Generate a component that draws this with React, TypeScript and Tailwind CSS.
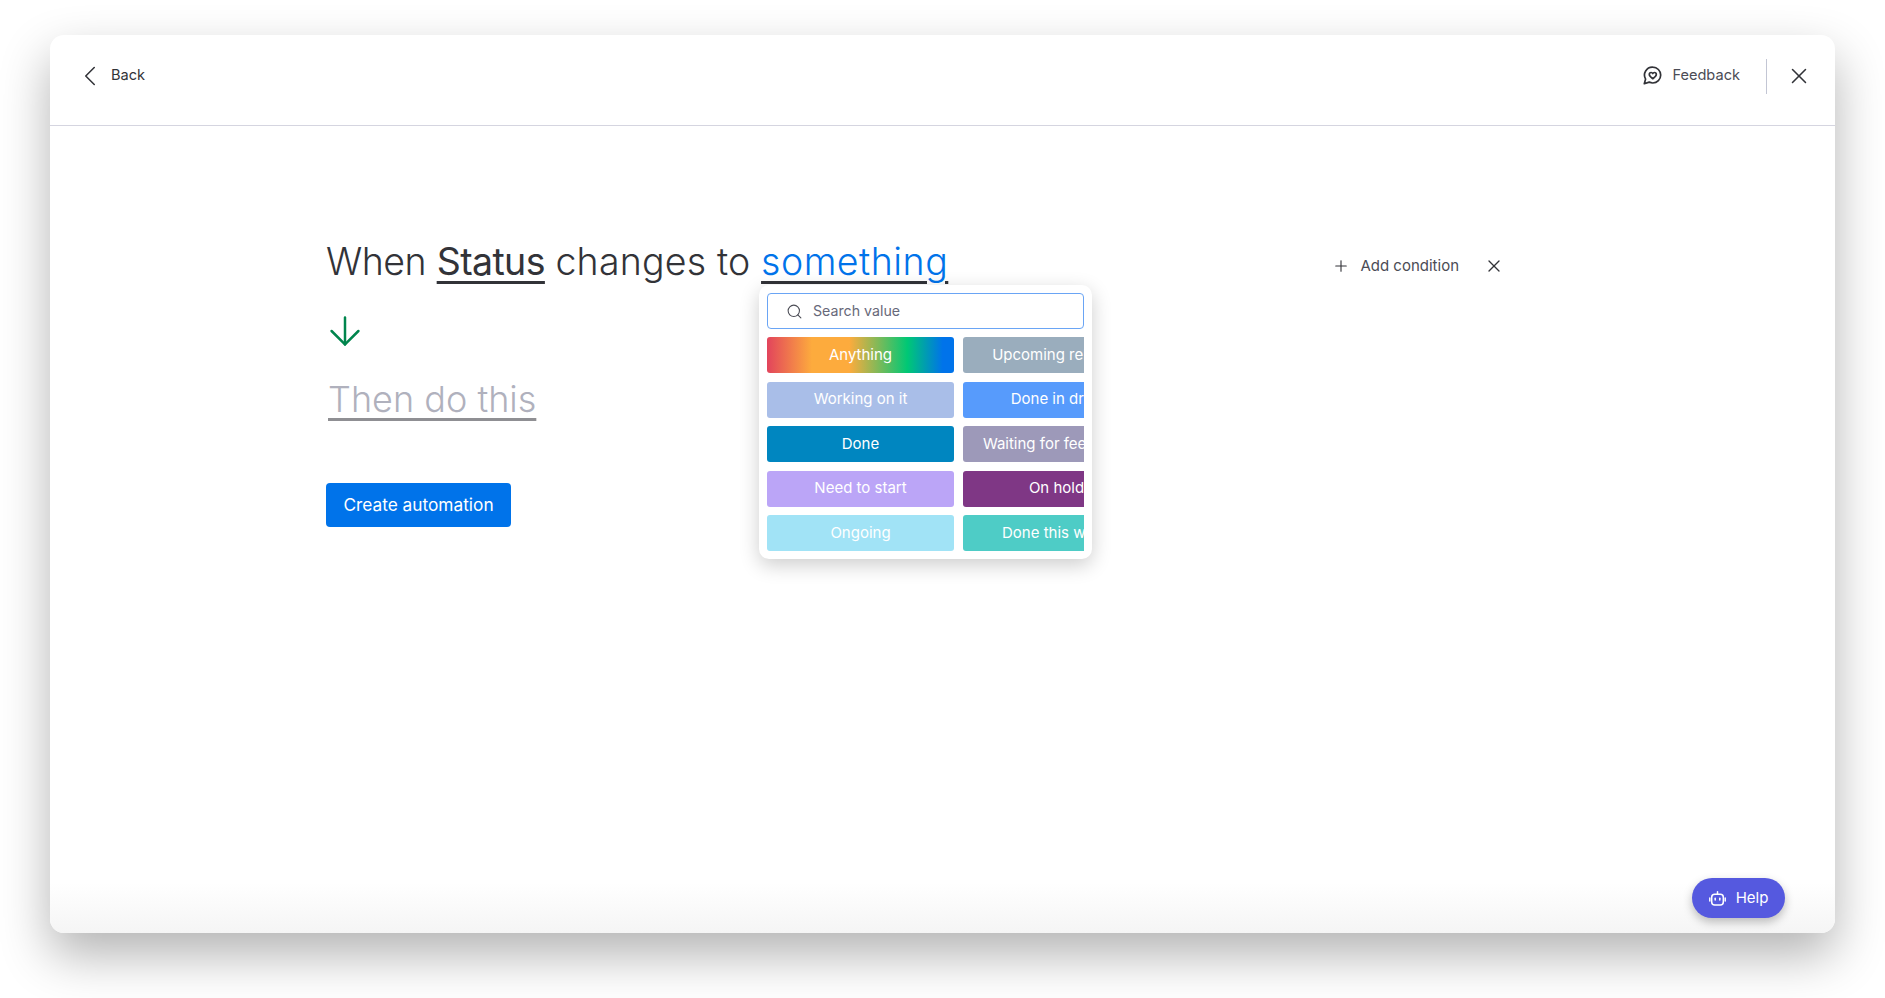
import { ChevronLeft, X, Plus, Search, ArrowDown } from 'lucide-react';

const STATUS_ROWS = [
  [
    { label: 'Anything', color: 'bg-[linear-gradient(90deg,#e2445c_0%,#fdab3d_24%,#fdab3d_44%,#00c875_75%,#0073ea_94%)]' },
    { label: 'Upcoming release', color: 'bg-[#9aadbd]' },
  ],
  [
    { label: 'Working on it', color: 'bg-[#a9bee8]' },
    { label: 'Done in draft', color: 'bg-[#579bfc]' },
  ],
  [
    { label: 'Done', color: 'bg-[#0086c0]' },
    { label: 'Waiting for feedback', color: 'bg-[#9d99b9]' },
  ],
  [
    { label: 'Need to start', color: 'bg-[#bba5f7]' },
    { label: 'On hold', color: 'bg-[#7f3785]' },
  ],
  [
    { label: 'Ongoing', color: 'bg-[#a1e3f6]' },
    { label: 'Done this week', color: 'bg-[#4eccc6]' },
  ],
];

function FeedbackIcon() {
  return (
    <svg width="19" height="19" viewBox="0 0 19 19" fill="none" stroke="#323338" strokeWidth="1.7" strokeLinejoin="round" strokeLinecap="round" className="-mt-[1px]">
      <path d="M9.8 1.2a7.9 7.9 0 0 1 0 15.8 8 8 0 0 1-3.6-.9l-4.9 1.6 1.3-4.6a7.9 7.9 0 0 1 7.2-11.900z" />
      <path d="M9.8 12.700c-2-1.400-3.500-2.600-3.500-4.200 0-1.200 0.900-2 1.900-2 0.700 0 1.300 0.300 1.600 1 0.300-0.700 0.900-1 1.600-1 1 0 1.900 0.800 1.900 2 0 1.600-1.500 2.800-3.500 4.200z" />
    </svg>
  );
}

function RobotIcon() {
  return (
    <svg width="17" height="15" viewBox="0 0 17 15" fill="none" stroke="white" strokeWidth="1.5" strokeLinecap="round">
      <rect x="2.700" y="3.200" width="11.600" height="10.800" rx="3" />
      <path d="M8.500 0.800v2.200" />
      <path d="M0.800 7v3" />
      <path d="M16.200 7v3" />
      <path d="M6.200 7.200v1.800" />
      <path d="M10.800 7.200v1.800" />
    </svg>
  );
}

export default function App() {
  return (
    <div className="h-[998px] overflow-hidden bg-white px-[50px] pt-[35px] font-['Inter',sans-serif]">
      <div className="relative flex h-[898px] flex-col rounded-[14px] bg-white shadow-[0_22px_50px_rgba(0,0,0,0.3)]">
        {/* Header */}
        <div className="flex h-[91px] shrink-0 items-center justify-between border-b border-[#d5d5e0] pb-[8px] pl-[23px] pr-[23px]">
          <div className="flex items-center gap-[4px] text-[14.600px] text-[#323338]">
            <ChevronLeft size={34} strokeWidth={1.1} />
            <span>Back</span>
          </div>
          <div className="flex items-center">
            <FeedbackIcon />
            <span className="ml-[10px] text-[14.600px] text-[#4b4c55]">Feedback</span>
            <div className="ml-[26px] mr-[19px] h-[35px] w-px bg-[#c3c6d4]" />
            <X size={26} strokeWidth={1.4} className="text-[#323338]" />
          </div>
        </div>

        {/* Sentence */}
        <div className="flex flex-col items-start pl-[276px] pr-[331px] pt-[111px]">
          <div className="flex w-full items-center justify-between">
            <h1 className="text-[37.500px] font-light leading-[50px] text-[#323338]">
              <span className="tracking-[-0.500px]">When</span>{' '}
              <span className="font-normal tracking-[-0.600px] underline decoration-[3px] underline-offset-[6px]">Status</span>{' '}
              <span className="tracking-[0.200px]">changes to</span>{' '}
              <span className="tracking-[0.500px] text-[#0073ea] underline decoration-[#323338] decoration-[3px] underline-offset-[6px]">something</span>
            </h1>
            <div className="mt-[8px] flex items-center text-[15px] text-[#4b4c55]">
              <Plus size={18} strokeWidth={1.5} className="text-[#323338]" />
              <span className="ml-[10px]">Add condition</span>
              <X size={20} strokeWidth={1.6} className="ml-[25px] text-[#323338]" />
            </div>
          </div>

          <ArrowDown size={46} strokeWidth={1.3} className="-ml-[4px] mt-[21px] text-[#00854d]" />

          <div className="mt-[20px] pl-[2px] text-[36px] font-light leading-[50px] text-[#b0b1bd] underline decoration-[#8f8f93] decoration-[3px] underline-offset-[6px]">
            Then do this
          </div>

          <button className="mt-[59px] h-[44px] w-[185px] rounded-[4px] bg-[#0073ea] text-[17.300px] text-white">
            Create automation
          </button>
        </div>

        {/* Status dropdown */}
        <div className="absolute left-[709px] top-[250px] w-[333px] rounded-[10px] bg-white p-[8px] shadow-[0_6px_20px_rgba(0,0,0,0.2)]">
          <div className="flex h-[36px] items-center rounded-[4px] border border-[#6aa5f5] pl-[18px] text-[14.200px] text-[#676879]">
            <Search size={17} strokeWidth={1.5} className="text-[#4b4c55]" />
            <span className="ml-[10px]">Search value</span>
          </div>
          <div className="mt-[8px] flex flex-col gap-[8.500px] overflow-hidden">
            {STATUS_ROWS.map((row) => (
              <div key={row[0].label} className="flex w-[383px] gap-[9px]">
                {row.map((status) => (
                  <div
                    key={status.label}
                    className={`flex h-[36px] w-[187px] items-center justify-center whitespace-nowrap rounded-[3px] text-[15px] text-white ${status.color}`}
                  >
                    {status.label}
                  </div>
                ))}
              </div>
            ))}
          </div>
        </div>

        {/* Bottom fade */}
        <div className="pointer-events-none absolute inset-x-0 bottom-0 h-[50px] rounded-b-[14px] bg-gradient-to-b from-white to-[#f5f5f5]" />

        {/* Help */}
        <button className="absolute bottom-[15px] right-[50px] flex h-[40px] w-[93px] items-center justify-center gap-[10px] rounded-full bg-[#5559df] text-[15px] text-white shadow-[0_4px_10px_rgba(0,0,0,0.25)]">
          <RobotIcon />
          <span>Help</span>
        </button>
      </div>
    </div>
  );
}
